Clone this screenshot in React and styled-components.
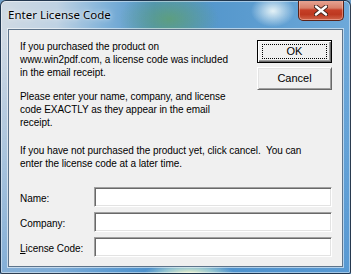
import React from "react";
import styled, { createGlobalStyle } from "styled-components";

const GlobalStyle = createGlobalStyle`
    html, body {
        margin: 0;
        padding: 0;
        background: #6f9fc8;
    }
    body {
        width: 351px;
        height: 274px;
        overflow: hidden;
    }
`;

function CloseGlyph() {
    return (
        <svg width="14" height="11" viewBox="0 0 14 11">
            <path d="M2 1.5 L12 9.5 M12 1.5 L2 9.5" stroke="#40231c" strokeWidth="4.2" strokeLinecap="round" />
            <path d="M2 1.5 L12 9.5 M12 1.5 L2 9.5" stroke="#ffffff" strokeWidth="2.4" strokeLinecap="round" />
        </svg>
    );
}

export default function App() {
    return (
        <>
            <GlobalStyle />
            <Window>
                <TitleBar>
                    <Title>Enter License Code</Title>
                    <CloseButton>
                        <CloseGlyph />
                    </CloseButton>
                </TitleBar>
                <Client>
                    <TopSection>
                        <TextColumn>
                            <Para>
                                If you purchased the product on<br />
                                www.win2pdf.com, a license code was included<br />
                                in the email receipt.
                            </Para>
                            <Para $gap={11}>
                                Please enter your name, company, and license<br />
                                code EXACTLY as they appear in the email<br />
                                receipt.
                            </Para>
                        </TextColumn>
                        <ButtonColumn>
                            <Button $default>
                                <FocusRing>OK</FocusRing>
                            </Button>
                            <Button>Cancel</Button>
                        </ButtonColumn>
                    </TopSection>
                    <Para $gap={15}>
                        If you have not purchased the product yet, click cancel.&nbsp; You can<br />
                        enter the license code at a later time.
                    </Para>
                    <Form>
                        <FieldRow>
                            <Label>Name:</Label>
                            <Input />
                        </FieldRow>
                        <FieldRow>
                            <Label>Company:</Label>
                            <Input />
                        </FieldRow>
                        <FieldRow>
                            <Label><u>L</u>icense Code:</Label>
                            <Input />
                        </FieldRow>
                    </Form>
                </Client>
            </Window>
        </>
    );
}

const Window = styled.div`
    box-sizing: border-box;
    width: 351px;
    height: 274px;
    display: flex;
    flex-direction: column;
    border: 1px solid rgba(20, 35, 55, 0.85);
    border-radius: 6px 6px 2px 2px;
    box-shadow: inset 0 0 0 1px rgba(255, 255, 255, 0.45);
    background:
        radial-gradient(ellipse 45px 10px at 188px 272px, rgba(240, 245, 200, 0.95) 0%, rgba(180, 220, 210, 0.7) 55%, transparent 100%),
        radial-gradient(ellipse 22px 16px at 272px 10px, rgba(235, 246, 248, 0.95), transparent),
        radial-gradient(ellipse 50px 30px at 168px 18px, rgba(95, 160, 115, 0.85), transparent),
        linear-gradient(180deg, transparent 0, transparent 40px, rgba(70, 140, 205, 0.55) 100%),
        linear-gradient(90deg, #cfd9e3 0%, #bfd2e3 16%, #80b2d9 30%, #4e92c8 44%, #5a9bcf 70%, #6ea9da 100%);
    overflow: hidden;
`;

const TitleBar = styled.div`
    height: 28px;
    display: flex;
    align-items: flex-start;
    padding-left: 7px;
`;

const Title = styled.span`
    margin-top: 6px;
    font-family: "Noto Sans", "Open Sans", sans-serif;
    font-size: 11.5px;
    line-height: 16px;
    color: #000;
    text-shadow: 0 0 6px rgba(255, 255, 255, 0.9), 0 0 2px rgba(255, 255, 255, 0.8);
`;

const CloseButton = styled.div`
    box-sizing: border-box;
    margin-left: auto;
    margin-right: 6px;
    margin-top: -1px;
    width: 46px;
    height: 21px;
    display: flex;
    align-items: center;
    justify-content: center;
    border: 1px solid #5a2218;
    border-top: none;
    border-radius: 0 0 5px 5px;
    box-shadow: inset 0 0 0 1px rgba(255, 210, 200, 0.45);
    background: linear-gradient(180deg, #e8a898 0%, #d8806a 40%, #c63f27 50%, #bd3820 72%, #d0644a 100%);
`;

const Client = styled.div`
    flex: 1;
    margin: 0 7px 6px 7px;
    display: flex;
    flex-direction: column;
    padding: 9px 10px 0 11px;
    background: #f0f0f0;
    border: 1px solid rgba(45, 75, 105, 0.75);
    box-shadow: 0 0 0 1px rgba(255, 255, 255, 0.55);
    font-family: "Liberation Sans", Arial, sans-serif;
    font-size: 10px;
    letter-spacing: -0.05px;
    line-height: 13px;
    color: #000;
`;

const TopSection = styled.div`
    display: flex;
    align-items: flex-start;
`;

const TextColumn = styled.div`
    flex: 1;
    min-width: 0;
    padding-top: 1px;
`;

const Para = styled.p`
    margin: ${(p) => p.$gap || 0}px 0 0 0;
    white-space: nowrap;
`;

const ButtonColumn = styled.div`
    width: 75px;
    margin-top: 1px;
    display: flex;
    flex-direction: column;
    gap: 4px;
    font-size: 11px;
    letter-spacing: 0;
`;

const Button = styled.div`
    box-sizing: border-box;
    height: 23px;
    display: flex;
    align-items: center;
    justify-content: center;
    background: #f0f0f0;
    border: 1px solid;
    border-color: ${(p) => (p.$default ? "#000" : "#fff #696969 #696969 #fff")};
    box-shadow: ${(p) =>
        p.$default
            ? "inset 1px 1px 0 #fff, inset -1px -1px 0 #696969, inset -2px -2px 0 #a0a0a0"
            : "inset 1px 1px 0 #e3e3e3, inset -1px -1px 0 #a0a0a0"};
`;

const FocusRing = styled.span`
    box-sizing: border-box;
    width: 65px;
    height: 15px;
    display: flex;
    align-items: center;
    justify-content: center;
    border: 1px dotted #000;
`;

const Form = styled.div`
    margin-top: 17px;
    display: flex;
    flex-direction: column;
    gap: 5px;
`;

const FieldRow = styled.div`
    display: flex;
    align-items: center;
`;

const Label = styled.span`
    width: 74px;
    padding-top: 2px;
    white-space: nowrap;
`;

const Input = styled.div`
    box-sizing: border-box;
    width: 238px;
    height: 20px;
    background: #fff;
    border: 1px solid;
    border-color: #a0a0a0 #fff #fff #a0a0a0;
    box-shadow: inset 1px 1px 0 #696969, inset -1px -1px 0 #e3e3e3;
`;
